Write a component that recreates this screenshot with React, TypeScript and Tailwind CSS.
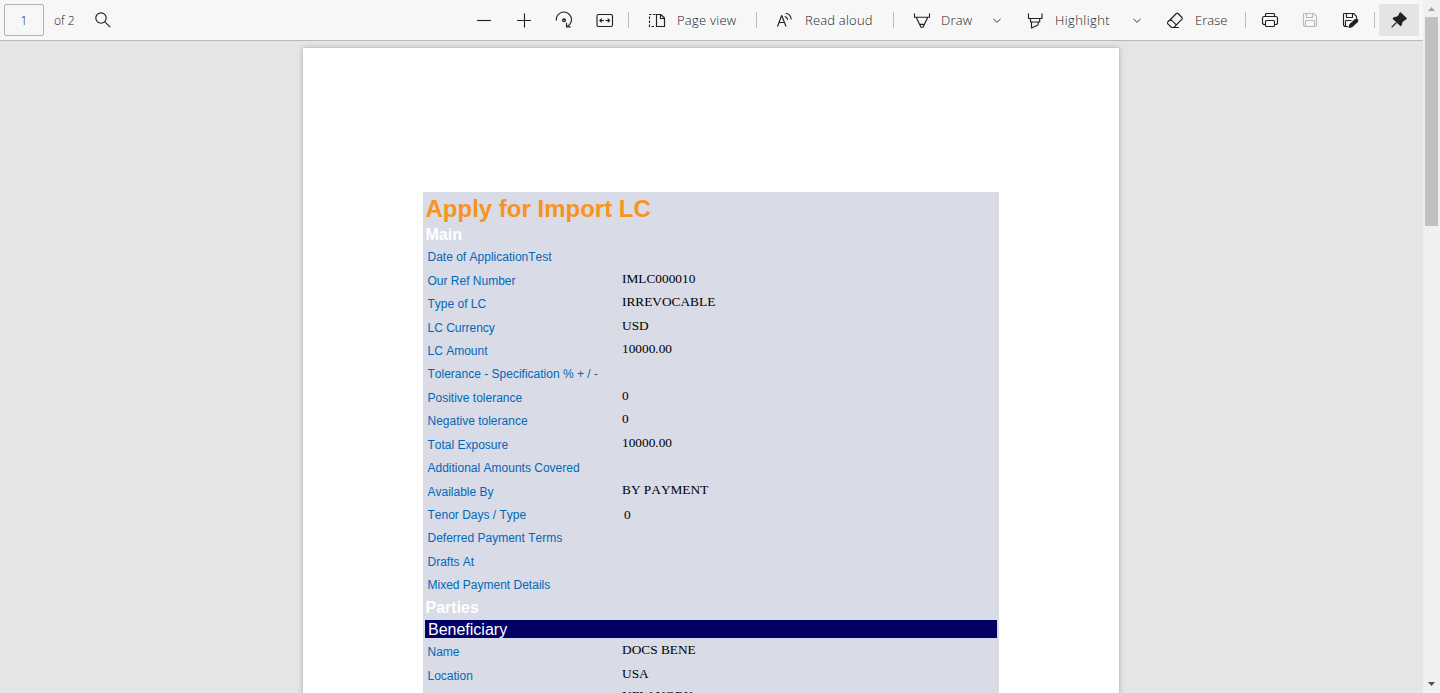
import type { ReactNode } from 'react';

type Row = { label: string; value?: string; valueClass?: string };

const mainRows: Row[] = [
  { label: 'Date of ApplicationTest' },
  { label: 'Our Ref Number', value: 'IMLC000010' },
  { label: 'Type of LC', value: 'IRREVOCABLE' },
  { label: 'LC Currency', value: 'USD' },
  { label: 'LC Amount', value: '10000.00' },
  { label: 'Tolerance - Specification % + / -' },
  { label: 'Positive tolerance', value: '0' },
  { label: 'Negative tolerance', value: '0' },
  { label: 'Total Exposure', value: '10000.00' },
  { label: 'Additional Amounts Covered' },
  { label: 'Available By', value: 'BY PAYMENT' },
  { label: 'Tenor Days / Type', value: '0', valueClass: 'pl-[2px] leading-[23px]' },
  { label: 'Deferred Payment Terms' },
  { label: 'Drafts At' },
  { label: 'Mixed Payment Details' },
];

const partyRows: Row[] = [
  { label: 'Name', value: 'DOCS BENE' },
  { label: 'Location', value: 'USA' },
  { label: '', value: 'NEW YORK', valueClass: 'leading-[17px]' },
];

function Icon({ children, className = '' }: { children: ReactNode; className?: string }) {
  return (
    <svg
      viewBox="0 0 18 18"
      className={`h-[18px] w-[18px] shrink-0 ${className}`}
      fill="none"
      stroke="currentColor"
      strokeWidth="1.15"
      strokeLinejoin="round"
    >
      {children}
    </svg>
  );
}

function Cell({ children, className = '' }: { children: ReactNode; className?: string }) {
  return <button className={`flex h-8 w-10 shrink-0 items-center justify-center ${className}`}>{children}</button>;
}

function Divider() {
  return (
    <div className="flex w-[9px] shrink-0 justify-center">
      <div className="h-4 w-px bg-[#bdbdbd]" />
    </div>
  );
}

function Chevron() {
  return (
    <Cell>
      <Icon>
        <path d="M5.5 8 9 11.3 12.5 8" strokeWidth="0.9" />
      </Icon>
    </Cell>
  );
}

function Caption({ children, className }: { children: ReactNode; className: string }) {
  return <span className={`whitespace-nowrap pt-px ${className}`}>{children}</span>;
}

function FieldRow({ label, value, valueClass = 'leading-[19px]' }: Row) {
  return (
    <div className="flex h-[23.43px] shrink-0 pl-[4.5px]">
      <div className="w-[194.5px] shrink-0 whitespace-nowrap text-[12px] leading-[25.3px] text-[#0069b7]">{label}</div>
      <div className={`whitespace-nowrap font-['Liberation_Serif',serif] text-[13.33px] text-black ${valueClass}`}>
        {value}
      </div>
    </div>
  );
}

function Toolbar() {
  return (
    <header className="flex h-[41px] shrink-0 items-center border-b border-[#b9b9b9] bg-[#f7f7f7] font-['Open_Sans',sans-serif] text-[13px] font-light text-[#222222]">
      <div className="flex w-[464px] shrink-0 items-center pl-1">
        <div className="flex h-8 w-10 items-center justify-center rounded-[2px] border border-[#b3b3b3] pt-px text-[12px]">1</div>
        <Caption className="w-[39px] pl-[10px] text-[12px]">of 2</Caption>
        <Cell>
          <Icon>
            <circle cx="7" cy="7" r="5.2" />
            <path d="m10.8 10.8 5.4 5.4" />
          </Icon>
        </Cell>
      </div>
      <Cell><Icon><path d="M2 9.5h14" /></Icon></Cell>
      <Cell><Icon><path d="M2 9.5h14M9.5 2.5v14" /></Icon></Cell>
      <Cell>
        <Icon>
          <path d="M1.3 9.5A7.6 7.6 0 1 1 12.3 15.4" />
          <path d="M11.5 11.8v4h4.2" />
          <circle cx="9" cy="9.3" r="1.3" strokeWidth="1.4" />
        </Icon>
      </Cell>
      <Cell className="pl-[1px]">
        <Icon>
          <rect x="1" y="3.5" width="15.5" height="12" rx="1.5" />
          <path d="M4 9.5h4M13.5 9.5h-4M5.8 7.6 3.9 9.5l1.9 1.9M11.7 7.6l1.9 1.9-1.9 1.9" />
        </Icon>
      </Cell>
      <Divider />
      <button className="flex w-[119px] shrink-0 items-center pl-[15px]">
        <Icon>
          <path d="M8.5 3.5h4.3L16.5 7v8.5h-8zM12.5 3.5v4h4" />
          <path d="M7.5 3.5H1.5v12H7.5" strokeDasharray="2.5 1.5" />
        </Icon>
        <Caption className="pl-[11px] tracking-[0.25px]">Page view</Caption>
      </button>
      <Divider />
      <button className="flex w-[128px] shrink-0 items-center pl-[15px]">
        <Icon>
          <path d="M1.5 15.5 5.7 4.5 10 15.5M3 11.5h5.4" />
          <path d="M8.7 5.5c1.8.3 2.8 1.6 3 3.4M9.7 2.2c3.3.4 5.2 2.9 5.5 6.3" />
        </Icon>
        <Caption className="pl-[11px] tracking-[0.2px]">Read aloud</Caption>
      </button>
      <Divider />
      <button className="flex w-[79px] shrink-0 items-center pl-[15px]">
        <Icon>
          <path d="M1.5 2.5v3.7h15V2.5M3.2 6.2l4.8 10h2l4.8-10M6.8 13.3h4.4" />
        </Icon>
        <Caption className="pl-[10px] tracking-[0.2px]">Draw</Caption>
      </button>
      <Chevron />
      <button className="flex w-[100px] shrink-0 items-center pl-[9px]">
        <Icon>
          <path d="M2.5 2.5v5h13.5v-5M4.5 7.5V11h9.2V7.5M5.5 11v6l5.9-2.7q.8-.4.8-1.4V11" />
        </Icon>
        <Caption className="pl-[11px] tracking-[0.4px]">Highlight</Caption>
      </button>
      <Chevron />
      <button className="flex w-[84px] shrink-0 items-center pl-[9px]">
        <Icon>
          <path d="m1.8 11 8.6-8.5q.8-.6 1.6 0l4 4q.7.8 0 1.6l-8.2 8.4H5.6L1.8 12.8q-.7-.9 0-1.8ZM4.7 8.3l5.6 5.6M7 16.5h6" />
        </Icon>
        <Caption className="pl-[11px]">Erase</Caption>
      </button>
      <Divider />
      <Cell>
        <Icon>
          <path d="M4.5 13.5h-2l-1-1V7.2q0-1.7 1.7-1.7h11.6q1.7 0 1.7 1.7v5.3l-1 1h-2M4.5 5.5V3.3l1-.8h7l1 .8v2.2" />
          <rect x="4.5" y="9.5" width="9" height="6" rx="1" />
        </Icon>
      </Cell>
      <Cell className="text-[#b9b9b9]">
        <Icon>
          <path d="M3 2.5h9.6l2.9 2.9V14q0 1.5-1.5 1.5H3.8l-1.3-1.2V3zM5.5 2.5v4h6v-4M4.5 15.5V10l.7-.5h7.6l.7.5v5.5" />
        </Icon>
      </Cell>
      <Cell>
        <Icon>
          <path d="M7.2 15.5H3.8l-1.3-1.2V3l.5-.5h9.6l2.9 2.9v2M5.5 2.5v4h6v-4M4.5 15.5V10l.7-.5h5.3" />
          <path d="m8.2 16.5.8-3 5.4-5q1.4-.8 2.2.4.6 1-.3 2l-5.5 4.8z" fill="currentColor" />
        </Icon>
      </Cell>
      <Divider />
      <Cell className="rounded-[2px] bg-[#e4e4e4]">
        <Icon>
          <path d="m10.5 1.8 5.7 5.7-1.2 1.2-.6-.2-2.7 2.8q.3 2-1 3.4L3.2 7.5q1.5-1.3 3.6-1l2.9-2.8-.3-.8z" fill="currentColor" />
          <path d="m6.5 11.5-4.9 4.9" />
        </Icon>
      </Cell>
    </header>
  );
}

export default function App() {
  return (
    <div className="flex h-[693px] w-full overflow-hidden bg-[#e5e5e5]">
      <div className="flex w-[1423px] shrink-0 flex-col">
        <Toolbar />
        <main className="flex flex-1 items-start overflow-hidden pl-[303px] pt-[7px]">
          <article className="h-[1056px] w-[816px] shrink-0 bg-white px-[120px] pt-36 shadow-[0_0_5px_rgba(0,0,0,0.28)]">
            <section className="flex h-[900px] flex-col bg-[#d9dbe7] font-['Liberation_Sans',sans-serif] [font-kerning:none]">
              <h1 className="h-8 shrink-0 pl-[2.5px] text-[24px] font-bold leading-[34px] text-[#f7941d]">Apply for Import LC</h1>
              <h2 className="h-[21.3px] shrink-0 pl-[2.5px] text-[16px] font-bold leading-[22px] text-white">Main</h2>
              {mainRows.map((row) => (
                <FieldRow key={row.label} {...row} />
              ))}
              <h2 className="h-[23.25px] shrink-0 pl-[2.5px] text-[16px] font-bold leading-[22px] text-white">Parties</h2>
              <h3 className="mx-[2px] mb-[2.3px] h-[18px] shrink-0 bg-[#000066] pl-[3px] text-[16px] leading-[20px] text-white">
                Beneficiary
              </h3>
              {partyRows.map((row) => (
                <FieldRow key={row.value} {...row} />
              ))}
            </section>
          </article>
        </main>
      </div>
      <aside className="flex w-[17px] shrink-0 flex-col items-center bg-[#f0f0f0]">
        <svg viewBox="0 0 17 17" className="h-[17px] w-[17px] shrink-0">
          <path d="M5 11h7L8.5 7z" fill="#a0a0a0" />
        </svg>
        <div className="h-[209px] w-[13px] shrink-0 bg-[#c1c1c1]" />
        <div className="flex-1" />
        <svg viewBox="0 0 17 17" className="h-[17px] w-[17px] shrink-0">
          <path d="M5 6h7l-3.5 4z" fill="#505050" />
        </svg>
      </aside>
    </div>
  );
}
